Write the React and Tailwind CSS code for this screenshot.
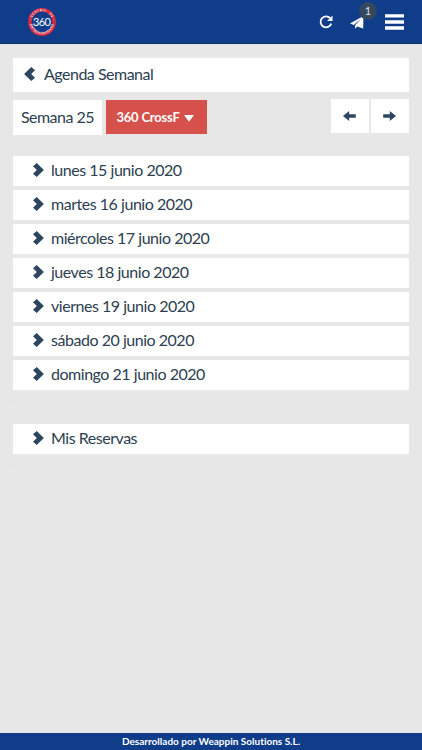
import clsx from 'clsx';

const days = [
  'lunes 15 junio 2020',
  'martes 16 junio 2020',
  'miércoles 17 junio 2020',
  'jueves 18 junio 2020',
  'viernes 19 junio 2020',
  'sábado 20 junio 2020',
  'domingo 21 junio 2020',
];

function Chevron({ className }) {
  return (
    <svg viewBox="0 0 11 14" className={clsx('w-[11px] h-[14px] shrink-0 text-[#2f4660]', className)} fill="currentColor">
      <path d="M3.7 0 L10.9 7 L3.7 14 L0 10.7 L3.8 7 L0 3.3 Z" />
    </svg>
  );
}

function Arrow({ className }) {
  return (
    <svg viewBox="0 0 13 10" className={clsx('w-[13px] h-[10px] text-[#2f4660]', className)} fill="currentColor">
      <path d="M0.2 3.2 H6.8 V0 L13 5 L6.8 10 V6.8 H0.2 Z" />
    </svg>
  );
}

function Logo() {
  return (
    <svg viewBox="0 0 30 30" className="w-[30px] h-[30px]">
      <defs>
        <path id="ringTop" d="M15 25.6 A10.6 10.6 0 1 1 15.01 25.6" />
        <path id="ringBottom" d="M2.6 15 A12.4 12.4 0 0 0 27.4 15" />
      </defs>
      <circle cx="15" cy="15" r="12.2" fill="none" stroke="#cf2a40" strokeWidth="3.6" />
      <g fill="#f3dfe8" fontSize="3.6" fontWeight="700">
        <text textAnchor="middle">
          <textPath href="#ringTop" startOffset="50%" textLength="29">· CENTRO · DE ·</textPath>
        </text>
        <text textAnchor="middle">
          <textPath href="#ringBottom" startOffset="50%" textLength="34">ENTRENAMIENTO</textPath>
        </text>
      </g>
      <text x="14.6" y="18.6" textAnchor="middle" fontSize="11" letterSpacing="-0.7" fill="#fff">360</text>
    </svg>
  );
}

// Collapsible row, shown closed
function Row({ label }) {
  return (
    <button className="flex items-center w-full h-[30px] bg-white pl-[20px] pb-[2px] text-left tracking-[-0.47px]">
      <Chevron />
      <span className="ml-[7px]">{label}</span>
    </button>
  );
}

export default function App() {
  return (
    <div className="flex flex-col h-screen bg-[#e7e7e7] text-[#2c3e50] text-[16px] leading-[20px] font-['Lato',sans-serif]">
      {/* Top bar */}
      <header className="flex items-center h-[44px] shrink-0 bg-[#0f3d89] text-white border-b border-[#0a3170] pl-[27px] pr-[18px] pt-px">
        <Logo />
        <div className="ml-auto flex items-center">
          <svg viewBox="0 0 14 14" className="w-[14px] h-[14px]" fill="none">
            <path d="M11.2 3.1 A5.5 5.5 0 1 0 12.3 8.6" stroke="currentColor" strokeWidth="1.8" />
            <path d="M13.5 0.6 V6 H8.1 Z" fill="currentColor" />
          </svg>
          <div className="relative ml-[17px]">
            <svg viewBox="0 0 14 13" className="w-[14px] h-[13px]" fill="currentColor">
              <path d="M13.4 0 L0 7.4 L3.8 9 L11.2 2.6 L5 9.6 V12.8 L7.2 10.4 L13.2 12.4 Z" />
            </svg>
            <span className="absolute -top-[14px] left-[9px] flex items-center justify-center w-[18px] h-[18px] rounded-full bg-[#34495e] text-[11px] leading-none text-[#dfe6ee]">
              1
            </span>
          </div>
          <svg viewBox="0 0 19 16" className="ml-[21px] w-[19px] h-[16px]" fill="currentColor">
            <path d="M0 0.2 H19 V3.6 H0 Z M0 6.3 H19 V9.7 H0 Z M0 12.3 H19 V15.7 H0 Z" />
          </svg>
        </div>
      </header>

      {/* Content */}
      <main className="flex-1 px-[13px] pt-[14px]">
        <div className="flex items-center h-[34px] bg-white pl-[11px] pb-[2px] tracking-[-0.5px]">
          <Chevron className="rotate-180" />
          <span className="ml-[9px]">Agenda Semanal</span>
        </div>

        <div className="flex items-start mt-[7px]">
          <div className="flex items-center justify-center w-[89px] h-[35px] mt-px pb-[2px] bg-white tracking-[-0.5px]">
            Semana 25
          </div>
          <button className="flex items-center justify-center w-[101px] h-[34px] mt-px ml-[4px] pr-[3px] bg-[#d6504c] text-white text-[13px] font-bold tracking-[-0.2px]">
            <span>360 CrossF</span>
            <svg viewBox="0 0 10 7" className="w-[10px] h-[7px] ml-[4px] mt-[2px]" fill="currentColor">
              <path d="M0 0 H10 L5 6.8 Z" />
            </svg>
          </button>
          <div className="ml-auto flex gap-[2px]">
            <button className="flex items-center justify-center w-[38px] h-[34px] pr-[2px] bg-white">
              <Arrow className="rotate-180" />
            </button>
            <button className="flex items-center justify-center w-[38px] h-[34px] pr-[2px] bg-white">
              <Arrow />
            </button>
          </div>
        </div>

        <div className="flex flex-col gap-[4px] mt-[21px]">
          {days.map((day) => (
            <Row key={day} label={day} />
          ))}
        </div>

        <hr className="mt-[17px] mb-[16px] border-[#ebebeb]" />
        <Row label="Mis Reservas" />
        <hr className="mt-[17px] border-[#ebebeb]" />
      </main>

      {/* Footer */}
      <footer className="h-[17px] shrink-0 bg-[#0f3d89] text-white text-center text-[10px] leading-[17px] font-bold [font-variant-ligatures:none]">
        Desarrollado por Weappin Solutions S.L.
      </footer>
    </div>
  );
}
